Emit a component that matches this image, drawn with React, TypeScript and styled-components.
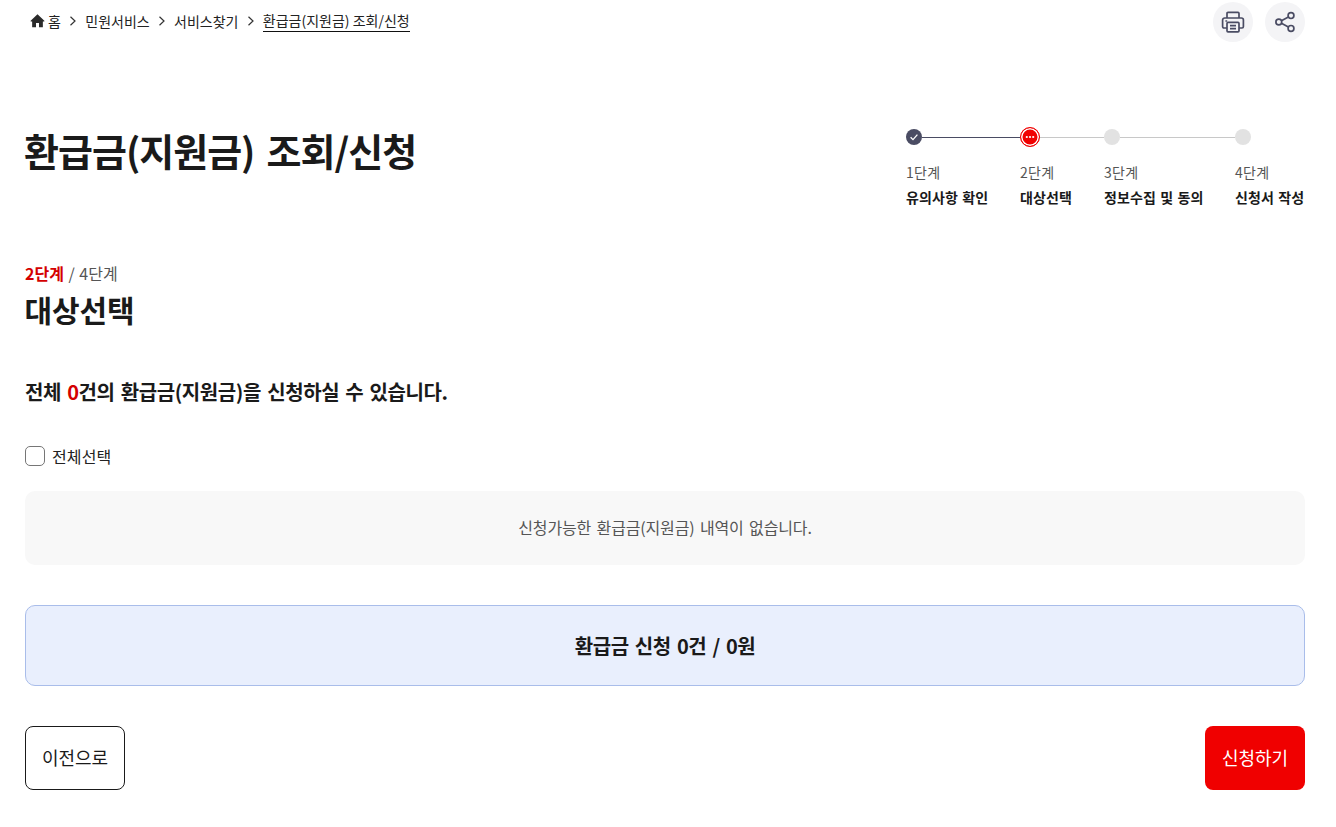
import React from 'react';
import styled, { createGlobalStyle } from 'styled-components';

const GlobalStyle = createGlobalStyle`
	html, body {
		margin: 0;
		padding: 0;
		background: #fff;
	}
	body {
		font-family: "Noto Sans CJK KR", "Noto Sans", sans-serif;
		color: #1a1a1a;
	}
`;

const STEPS = [
	{ label: '1단계', name: '유의사항 확인', state: 'done', lineAfter: 'on' },
	{ label: '2단계', name: '대상선택', state: 'current', lineAfter: 'off' },
	{ label: '3단계', name: '정보수집 및 동의', state: 'todo', lineAfter: 'off' },
	{ label: '4단계', name: '신청서 작성', state: 'todo' },
];

const App = () => {
	return (
		<Page>
			<GlobalStyle />
			<TopBar>
				<Breadcrumb>
					<Crumb>
						<svg width="15" height="15" viewBox="0 0 14 14">
							<path d="M7 1.2 0.6 7.2 V8 H2 V13.2 H5.6 V9.4 H8.4 V13.2 H12 V8 H13.4 V7.2 Z" fill="#2b2b2b" />
						</svg>
						홈
					</Crumb>
					<Chevron />
					<Crumb>민원서비스</Crumb>
					<Chevron />
					<Crumb>서비스찾기</Crumb>
					<Chevron />
					<CurrentCrumb>환급금(지원금) 조회/신청</CurrentCrumb>
				</Breadcrumb>
				<Tools>
					<ToolButton aria-label="인쇄">
						<svg width="24" height="24" viewBox="0 0 24 24" fill="none" stroke="#4a4c63" strokeWidth="1.7" strokeLinejoin="round">
							<path d="M6 8V3.4a1 1 0 0 1 1-1h10a1 1 0 0 1 1 1V8" />
							<path d="M6 18H3a1.4 1.4 0 0 1-1.4-1.4V10A2 2 0 0 1 3.6 8h16.8a2 2 0 0 1 2 2v6.6A1.4 1.4 0 0 1 21 18h-3" />
							<rect x="6" y="12.4" width="12" height="9.4" rx="1" />
							<path d="M9 15.6h6M9 18.6h6M4.4 11h1.8" />
						</svg>
					</ToolButton>
					<ToolButton aria-label="공유">
						<svg width="24" height="24" viewBox="0 0 24 24" fill="none" stroke="#4a4c63" strokeWidth="1.7">
							<circle cx="18" cy="5.6" r="2.9" />
							<circle cx="18" cy="18.4" r="2.9" />
							<circle cx="5.8" cy="12" r="2.9" />
							<path d="M8.4 10.7 15.4 7M8.4 13.3l7 3.8" />
						</svg>
					</ToolButton>
				</Tools>
			</TopBar>

			<Header>
				<PageTitle>환급금(지원금) 조회/신청</PageTitle>
				<Stepper>
					{STEPS.map((step) => (
						<Step key={step.label}>
							<Track>
								<Dot state={step.state}>
									{step.state === 'done' && (
										<svg width="10" height="10" viewBox="0 0 10 10" fill="none" stroke="#fff" strokeWidth="1.3">
											<path d="M1.6 5.2 4 7.6 8.4 2.6" />
										</svg>
									)}
									{step.state === 'current' && (
										<svg width="10" height="4" viewBox="0 0 10 4" fill="#fff">
											<circle cx="1.8" cy="2" r="1.1" />
											<circle cx="5" cy="2" r="1.1" />
											<circle cx="8.2" cy="2" r="1.1" />
										</svg>
									)}
								</Dot>
								{step.lineAfter && <Line on={step.lineAfter === 'on'} />}
							</Track>
							<StepLabel>{step.label}</StepLabel>
							<StepName>{step.name}</StepName>
						</Step>
					))}
				</Stepper>
			</Header>

			<StepCount>
				<strong>2단계</strong> / 4단계
			</StepCount>
			<SectionTitle>대상선택</SectionTitle>

			<Summary>
				전체 <em>0</em>건의 환급금(지원금)을 신청하실 수 있습니다.
			</Summary>

			<CheckRow>
				<CheckBox type="checkbox" />
				전체선택
			</CheckRow>

			<EmptyBox>신청가능한 환급금(지원금) 내역이 없습니다.</EmptyBox>

			<TotalBox>환급금 신청 0건 / 0원</TotalBox>

			<Actions>
				<PrevButton>이전으로</PrevButton>
				<ApplyButton>신청하기</ApplyButton>
			</Actions>
		</Page>
	);
};

const Chevron = () => (
	<ChevronIcon width="8" height="10" viewBox="0 0 8 10" fill="none" stroke="#333" strokeWidth="1.2">
		<path d="M1.5 0.8 6 5 1.5 9.2" />
	</ChevronIcon>
);

const Page = styled.div`
	width: 1336px;
	height: 827px;
	box-sizing: border-box;
	padding: 0 31px 0 25px;
	overflow: hidden;
`;

const TopBar = styled.div`
	display: flex;
	justify-content: space-between;
	align-items: flex-start;
	height: 42px;
	padding-top: 2px;
	margin-bottom: -2px;
`;

const Breadcrumb = styled.div`
	display: flex;
	align-items: center;
	height: 37px;
	padding-left: 5px;
	font-size: 14px;
	color: #222;
`;

const Crumb = styled.span`
	display: inline-flex;
	align-items: center;
	gap: 3px;
`;

const CurrentCrumb = styled.span`
	line-height: 21px;
	border-bottom: 1px solid #111;
`;

const ChevronIcon = styled.svg`
	margin: 0 8.2px;
`;

const Tools = styled.div`
	display: flex;
	gap: 12px;
`;

const ToolButton = styled.button`
	display: flex;
	align-items: center;
	justify-content: center;
	width: 40px;
	height: 40px;
	padding: 0;
	border: 0;
	border-radius: 50%;
	background: #f4f4f6;
`;

const Header = styled.div`
	display: flex;
	justify-content: space-between;
	align-items: flex-start;
	height: 219px;
`;

const PageTitle = styled.h1`
	margin: 78px 0 0 -1px;
	font-size: 38px;
	line-height: 60px;
	font-weight: 700;
	letter-spacing: -1px;
	word-spacing: 4.5px;
	color: #1a1a1a;
`;

const Stepper = styled.div`
	display: flex;
	margin-top: 86px;
`;

const Step = styled.div`
	display: flex;
	flex-direction: column;
	align-items: flex-start;

	&:nth-child(1) { width: 114px; }
	&:nth-child(2) { width: 84px; }
	&:nth-child(3) { width: 131px; }
	&:nth-child(4) { width: 70px; }
`;

const Track = styled.div`
	display: flex;
	align-items: center;
	width: 100%;
	height: 18px;
`;

const Dot = styled.span<{ state: string }>`
	flex: none;
	display: flex;
	align-items: center;
	justify-content: center;
	box-sizing: border-box;
	width: 16px;
	height: 16px;
	border-radius: 50%;
	background: ${({ state }) => (state === 'done' ? '#4a4c63' : '#e2e2e2')};

	${({ state }) =>
		state === 'current' &&
		`
		width: 20px;
		height: 20px;
		border: 1px solid #f00000;
		background: #f00000;
		box-shadow: inset 0 0 0 1.5px #fff;
	`}
`;

const Line = styled.span<{ on: boolean }>`
	flex: 1;
	height: 1px;
	background: ${({ on }) => (on ? '#4a4c63' : '#c8c8c8')};
`;

const StepLabel = styled.div`
	margin-top: 16px;
	font-size: 14px;
	line-height: 20px;
	letter-spacing: 0.3px;
	color: #555;
`;

const StepName = styled.div`
	margin-top: 5px;
	font-size: 14px;
	line-height: 20px;
	font-weight: 700;
	letter-spacing: 0.1px;
	word-spacing: 1px;
	white-space: nowrap;
	color: #1a1a1a;
`;

const StepCount = styled.div`
	height: 24px;
	font-size: 16px;
	line-height: 24px;
	word-spacing: 1px;
	color: #555;

	strong {
		font-weight: 700;
		color: #d40000;
	}
`;

const SectionTitle = styled.h2`
	margin: 2px 0 0 -0.5px;
	font-size: 30px;
	line-height: 44px;
	font-weight: 700;
	letter-spacing: -0.1px;
	color: #1a1a1a;
`;

const Summary = styled.p`
	margin: 46px 0 0;
	font-size: 20px;
	line-height: 30px;
	font-weight: 700;
	letter-spacing: -0.4px;
	word-spacing: 2px;
	color: #1a1a1a;

	em {
		font-style: normal;
		font-weight: 700;
		color: #d40000;
	}
`;

const CheckRow = styled.label`
	display: flex;
	align-items: center;
	gap: 7px;
	margin-top: 37px;
	height: 24px;
	font-size: 16px;
	letter-spacing: 0.1px;
	color: #222;
`;

const CheckBox = styled.input`
	appearance: none;
	width: 20px;
	height: 20px;
	margin: 0;
	border: 1px solid #767676;
	border-radius: 5px;
	background: #fff;
`;

const EmptyBox = styled.div`
	display: flex;
	align-items: center;
	justify-content: center;
	box-sizing: border-box;
	height: 74px;
	margin-top: 23px;
	padding-bottom: 3px;
	border-radius: 10px;
	background: #f8f8f8;
	font-size: 16px;
	letter-spacing: -0.15px;
	word-spacing: 2px;
	color: #555;
`;

const TotalBox = styled.div`
	display: flex;
	align-items: center;
	justify-content: center;
	box-sizing: border-box;
	height: 81px;
	margin-top: 40px;
	border: 1px solid #a9bdea;
	border-radius: 10px;
	background: #e9effd;
	font-size: 20px;
	font-weight: 700;
	letter-spacing: -0.4px;
	word-spacing: 2px;
	color: #1a1a1a;
`;

const Actions = styled.div`
	display: flex;
	justify-content: space-between;
	margin-top: 40px;
`;

const PrevButton = styled.button`
	width: 100px;
	height: 64px;
	padding: 0 0 2px;
	border: 1px solid #1a1a1a;
	border-radius: 8px;
	background: #fff;
	font-family: inherit;
	font-size: 18px;
	letter-spacing: -0.1px;
	color: #1a1a1a;
`;

const ApplyButton = styled(PrevButton)`
	border: 0;
	background: #f00000;
	color: #fff;
`;

export default App;
